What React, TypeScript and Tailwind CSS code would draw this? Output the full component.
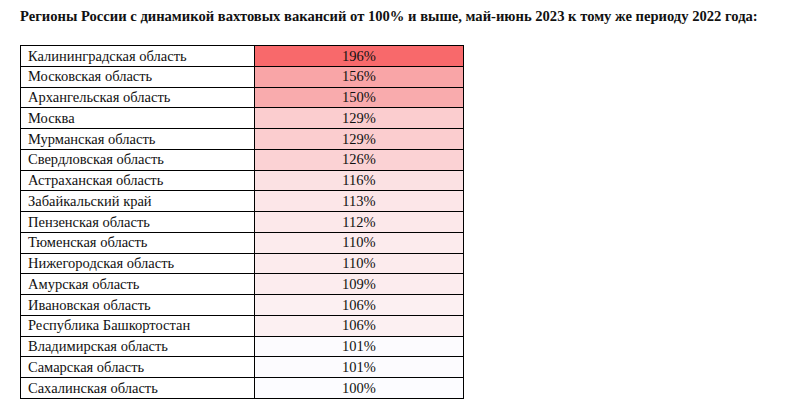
const rows = [
  { name: "Калининградская область", value: "196%", bg: "bg-[#f8696b]" },
  { name: "Московская область", value: "156%", bg: "bg-[#f9a5a7]" },
  { name: "Архангельская область", value: "150%", bg: "bg-[#f9abad]" },
  { name: "Москва", value: "129%", bg: "bg-[#fbcdcf]" },
  { name: "Мурманская область", value: "129%", bg: "bg-[#fbcdcf]" },
  { name: "Свердловская область", value: "126%", bg: "bg-[#fbd2d4]" },
  { name: "Астраханская область", value: "116%", bg: "bg-[#fbe1e3]" },
  { name: "Забайкальский край", value: "113%", bg: "bg-[#fce6e8]" },
  { name: "Пензенская область", value: "112%", bg: "bg-[#fce8ea]" },
  { name: "Тюменская область", value: "110%", bg: "bg-[#fcebed]" },
  { name: "Нижегородская область", value: "110%", bg: "bg-[#fcebed]" },
  { name: "Амурская область", value: "109%", bg: "bg-[#fcecee]" },
  { name: "Ивановская область", value: "106%", bg: "bg-[#fcf0f2]" },
  { name: "Республика Башкортостан", value: "106%", bg: "bg-[#fcf0f2]" },
  { name: "Владимирская область", value: "101%", bg: "bg-[#fcfbfe]" },
  { name: "Самарская область", value: "101%", bg: "bg-[#fcfbfe]" },
  { name: "Сахалинская область", value: "100%", bg: "bg-[#fcfcff]" },
];

export default function App() {
  return (
    <div className="min-h-screen bg-white px-5 pt-[7px] font-['Liberation_Serif',serif] text-[#111]">
      <h1 className="text-[14.6px] font-bold leading-[18px]">
        Регионы России с динамикой вахтовых вакансий от 100% и выше, май-июнь 2023 к тому же периоду 2022 года:
      </h1>

      <table className="mt-[20px] w-[444px] border-collapse text-[14.5px]">
        <tbody>
          {rows.map((r) => (
            <tr key={r.name} className="h-[20.75px]">
              <td className="w-[234px] border border-black pl-[7px] leading-none">
                {r.name}
              </td>
              <td className={`border border-black text-center leading-none ${r.bg}`}>
                {r.value}
              </td>
            </tr>
          ))}
        </tbody>
      </table>
    </div>
  );
}
